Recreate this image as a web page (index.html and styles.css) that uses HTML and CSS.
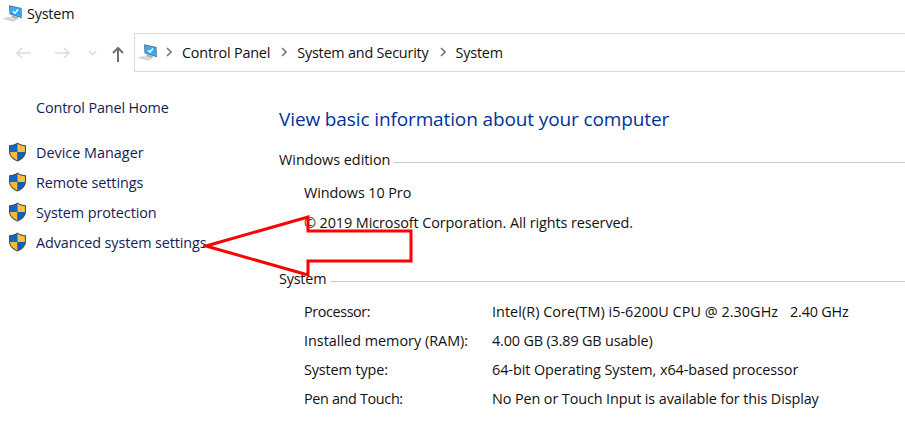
FILE: index.html
```
<!DOCTYPE html>
<html lang="en">
<head>
<meta charset="utf-8">
<title>System</title>
<link rel="stylesheet" href="styles.css">
</head>
<body>
<svg class="defs" width="0" height="0" aria-hidden="true">
  <symbol id="pc" viewBox="0 0 20 18">
    <path d="M0 13.6 4.8 11.4 15.2 13.3 10.8 16.6Z" fill="#d9dde0"/>
    <path d="M1 13.8 10.8 15.9 14.2 13.5" fill="none" stroke="#b9c0c6" stroke-width=".7"/>
    <path d="M9 10.3 14.8 12.2 14.4 14.2 8.4 12.3Z" fill="#aab2b8"/>
    <path d="M6 .3 18.6 3.1 18.8 13.2 6.5 9.2Z" fill="#55707f"/>
    <path d="M6.7 1.2 17.8 3.6 18 12.2 7.2 8.6Z" fill="#35a9f4"/>
    <path d="M10 6.2 12 8.2 15 4.5" fill="none" stroke="#fff" stroke-width="1.5"/>
  </symbol>
  <symbol id="shield" viewBox="0 0 18 20">
    <path d="M9 .5C6.5 2.3 3.5 3.2.5 3.2V9.5C.5 14 4 17.5 9 19.5 14 17.5 17.5 14 17.5 9.5V3.2C14.5 3.2 11.5 2.3 9 .5Z" fill="#4b4f53"/>
    <path d="M9 1.7C6.8 3.2 4.4 4 1.6 4.2V10H9Z" fill="#0968cc"/>
    <path d="M9 1.7C11.2 3.2 13.6 4 16.4 4.2V10H9Z" fill="#ffc03b"/>
    <path d="M1.6 10C1.8 13.9 4.9 16.6 9 18.4V10Z" fill="#ffb92e"/>
    <path d="M16.4 10C16.2 13.9 13.1 16.6 9 18.4V10Z" fill="#0960c2"/>
  </symbol>
  <symbol id="sep" viewBox="0 0 6 10">
    <path d="M1 1 5 5 1 9" fill="none" stroke="#777" stroke-width="1.6"/>
  </symbol>
</svg>

<header class="titlebar">
  <svg class="pc"><use href="#pc"/></svg>
  <span class="t-title">System</span>
</header>

<nav class="navbar">
  <div class="buttons">
    <svg width="120" height="20" viewBox="0 0 120 20" fill="none">
      <g stroke="#dcdcdc" stroke-width="1.5">
        <path d="M15 10H1M6 5 1 10 6 15"/>
        <path d="M39 10H53M48 5 53 10 48 15"/>
        <path d="M73 8 76.5 11.5 80 8"/>
      </g>
      <path d="M102 19V5M97 10 102 5 107 10" stroke="#707070" stroke-width="2"/>
    </svg>
  </div>
  <div class="address">
    <svg class="pc"><use href="#pc"/></svg>
    <svg class="sep first"><use href="#sep"/></svg>
    <span class="crumb">Control Panel</span>
    <svg class="sep"><use href="#sep"/></svg>
    <span class="crumb">System and Security</span>
    <svg class="sep"><use href="#sep"/></svg>
    <span class="crumb">System</span>
  </div>
</nav>

<div class="body">
  <aside class="side">
    <a class="home">Control Panel Home</a>
    <a class="link"><svg class="shield"><use href="#shield"/></svg><span class="s1">Device Manager</span></a>
    <a class="link"><svg class="shield"><use href="#shield"/></svg><span class="s2">Remote settings</span></a>
    <a class="link"><svg class="shield"><use href="#shield"/></svg><span class="s3">System protection</span></a>
    <a class="link"><svg class="shield"><use href="#shield"/></svg><span class="s4">Advanced system settings</span></a>
  </aside>
  <main class="main">
    <h1>View basic information about your computer</h1>
    <h2 class="group"><span class="g1">Windows edition</span></h2>
    <div class="edition">
      <p>Windows 10 Pro</p>
      <p>© 2019 Microsoft Corporation. All rights reserved.</p>
    </div>
    <h2 class="group"><span>System</span></h2>
    <dl class="specs">
      <dt class="k1">Processor:</dt><dd><span class="v1">Intel(R) Core(TM) i5-6200U CPU @ 2.30GHz</span><span class="v1b">2.40 GHz</span></dd>
      <dt class="k2">Installed memory (RAM):</dt><dd class="v2">4.00 GB (3.89 GB usable)</dd>
      <dt class="k3">System type:</dt><dd class="v3">64-bit Operating System, x64-based processor</dd>
      <dt class="k4">Pen and Touch:</dt><dd class="v4">No Pen or Touch Input is available for this Display</dd>
    </dl>
  </main>
</div>

<svg class="arrow" width="210" height="64" viewBox="0 0 210 64">
  <path d="M3 31 105 2V16H208V46H105V60Z" fill="none" stroke="#f00" stroke-width="3"/>
</svg>
</body>
</html>
```
FILE: styles.css
```
* { box-sizing: border-box; }
body {
  margin: 0;
  width: 905px;
  height: 442px;
  overflow: hidden;
  position: relative;
  background: #fff;
  color: #111;
  font: 14.4px/20px "Open Sans", "Noto Sans", sans-serif;
  letter-spacing: -0.2px;
  white-space: nowrap;
}
h1, h2, p, dl, dd { margin: 0; font-weight: 400; font-size: inherit; }
.defs { position: absolute; }
svg { flex: none; display: block; }
.pc { width: 20px; height: 18px; }
.titlebar { display: flex; height: 33px; padding: 4px 0 0 3px; gap: 4px; }
.titlebar .pc { margin-top: 1px; }
.navbar { display: flex; height: 39px; }
.buttons { width: 134px; padding: 10px 0 0 16px; }
.address {
  flex: 1;
  display: flex;
  align-items: center;
  border: 1px solid #d9d9d9;
  border-right: 0;
  padding-left: 3px;
}
.sep { width: 6px; height: 10px; margin: 0 10px 2px 11px; }
.sep.first { margin-left: 8px; }
.body { display: flex; }
.side { width: 279px; padding: 26px 0 0 8px; color: #151c55; }
.home { display: block; padding-left: 28px; height: 40px; letter-spacing: -0.14px; }
.link { display: flex; align-items: center; gap: 9px; height: 30px; }
.shield { width: 19px; height: 20px; margin-bottom: 2px; }
.main { flex: 1; padding-top: 33px; }
h1 { height: 44px; line-height: 28px; font-size: 19px; color: #003399; letter-spacing: -0.12px; }
.group { display: flex; align-items: center; gap: 4px; height: 22px; }
.group::after { content: ""; flex: 1; height: 1px; background: #c8c8c8; margin-top: 4px; }
.edition { padding: 7px 0 0 25px; height: 97px; line-height: 30px; letter-spacing: -0.08px; }
.specs { display: grid; grid-template-columns: 188px 1fr; grid-auto-rows: 29px; line-height: 29px; padding: 7px 0 0 25px; }
.s1 { letter-spacing: 0; }
.s2 { letter-spacing: -0.06px; }
.s3 { letter-spacing: -0.08px; }
.s4 { letter-spacing: -0.1px; }
.g1 { letter-spacing: -0.02px; }
.k1 { letter-spacing: -0.4px; }
.k2 { letter-spacing: 0; }
.k3 { letter-spacing: -0.12px; }
.k4 { letter-spacing: -0.34px; }
.v1 { letter-spacing: 0.05px; }
.v1b { margin-left: 12px; }
.v2 { letter-spacing: -0.15px; }
.v3 { letter-spacing: -0.06px; }
.v4 { letter-spacing: -0.1px; }
.arrow { position: absolute; left: 203px; top: 215px; }
```
